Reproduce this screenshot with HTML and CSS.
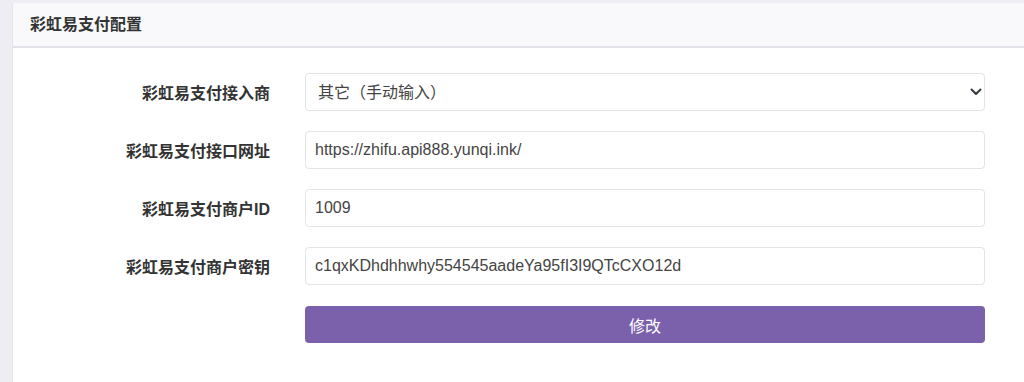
FILE: index.html
```html
<!DOCTYPE html>
<html lang="zh-CN">
<head>
<meta charset="utf-8">
<title>彩虹易支付配置</title>
<link rel="stylesheet" href="styles.css">
</head>
<body>
<div class="page">
  <div class="card">
    <div class="card-header">彩虹易支付配置</div>
    <form class="card-body">
      <div class="row">
        <label class="label">彩虹易支付接入商</label>
        <div class="select-wrap">
          <select class="control select">
            <option>其它（手动输入）</option>
          </select>
          <svg class="chevron" width="12" height="8" viewBox="0 0 12 8"><path d="M1.5 1.5 L6 6 L10.5 1.5" fill="none" stroke="#343a40" stroke-width="2" stroke-linecap="round" stroke-linejoin="round"/></svg>
        </div>
      </div>
      <div class="row">
        <label class="label">彩虹易支付接口网址</label>
        <input class="control" type="text" value="https://zhifu.api888.yunqi.ink/">
      </div>
      <div class="row">
        <label class="label">彩虹易支付商户ID</label>
        <input class="control" type="text" value="1009">
      </div>
      <div class="row">
        <label class="label">彩虹易支付商户密钥</label>
        <input class="control" type="text" value="c1qxKDhdhhwhy554545aadeYa95fI3I9QTcCXO12d">
      </div>
      <div class="row row-btn">
        <span></span>
        <button class="btn" type="button">修改</button>
      </div>
    </form>
  </div>
</div>
</body>
</html>
```

FILE: styles.css
```css
html, body {
  margin: 0;
  padding: 0;
  background: #eeedf3;
  height: 100%;
}
body {
  font-family: "Liberation Sans", "Noto Sans CJK SC", sans-serif;
  color: #333;
}
.page {
  padding: 3px 0 0 12px;
  height: 100%;
  box-sizing: border-box;
}
.card {
  background: #fff;
  border-left: 1px solid #e6e5ec;
  height: 100%;
}
.card-header {
  height: 43px;
  line-height: 43px;
  padding: 0 17px;
  background: #f9f9fc;
  border-bottom: 2px solid #e2e2e9;
  font-size: 16px;
  font-weight: bold;
  color: #333;
}
.card-body {
  margin: 0;
  padding: 25px 0 0 0;
  display: flex;
  flex-direction: column;
  gap: 20px;
}
.row {
  display: grid;
  grid-template-columns: 257px 680px;
  column-gap: 35px;
  align-items: center;
}
.row-btn {
  margin-top: 1px;
}
.label {
  text-align: right;
  font-size: 16px;
  font-weight: bold;
  color: #333;
}
.control {
  box-sizing: border-box;
  width: 680px;
  height: 38px;
  border: 1px solid #e3e3e8;
  border-radius: 4px;
  padding: 0 9px;
  font-family: "Liberation Sans", "Noto Sans CJK SC", sans-serif;
  font-size: 16px;
  color: #444;
  background: #fff;
  outline: none;
}
.select-wrap {
  position: relative;
  width: 680px;
}
.select {
  appearance: none;
  -webkit-appearance: none;
  padding-left: 12px;
  display: block;
}
.chevron {
  position: absolute;
  right: 3px;
  top: 15px;
}
.btn {
  width: 680px;
  height: 37px;
  border: none;
  border-radius: 4px;
  background: #7b61ac;
  color: #fff;
  font-family: "Liberation Sans", "Noto Sans CJK SC", sans-serif;
  font-size: 16px;
  cursor: pointer;
}
```
